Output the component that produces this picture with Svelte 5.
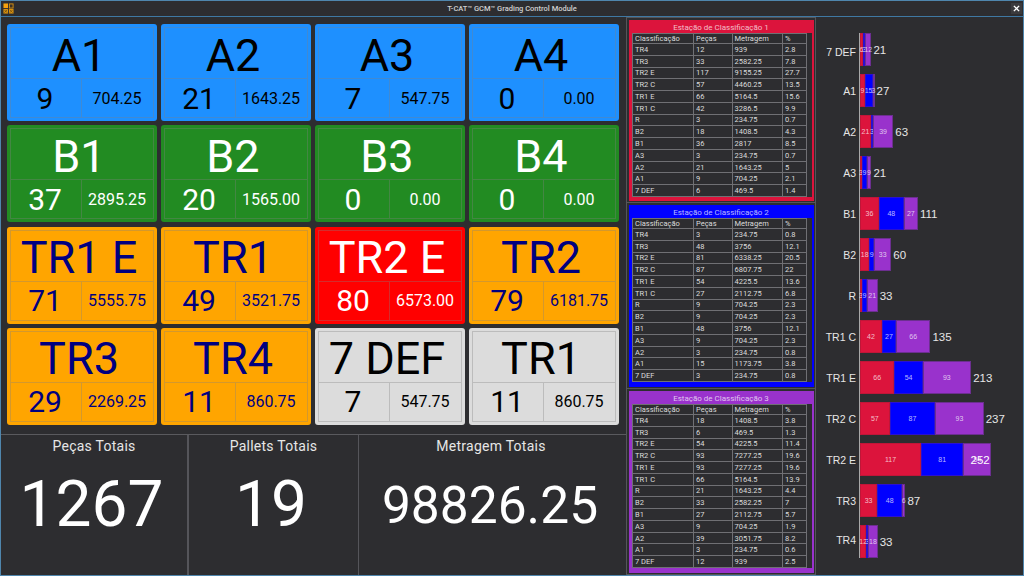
<script>
  const tiles = [
    { name: 'A1', n: '9', m: '704.25', c: 'blue' },
    { name: 'A2', n: '21', m: '1643.25', c: 'blue' },
    { name: 'A3', n: '7', m: '547.75', c: 'blue' },
    { name: 'A4', n: '0', m: '0.00', c: 'blue' },
    { name: 'B1', n: '37', m: '2895.25', c: 'green' },
    { name: 'B2', n: '20', m: '1565.00', c: 'green' },
    { name: 'B3', n: '0', m: '0.00', c: 'green' },
    { name: 'B4', n: '0', m: '0.00', c: 'green' },
    { name: 'TR1 E', n: '71', m: '5555.75', c: 'orange' },
    { name: 'TR1', n: '49', m: '3521.75', c: 'orange' },
    { name: 'TR2 E', n: '80', m: '6573.00', c: 'red' },
    { name: 'TR2', n: '79', m: '6181.75', c: 'orange' },
    { name: 'TR3', n: '29', m: '2269.25', c: 'orange' },
    { name: 'TR4', n: '11', m: '860.75', c: 'orange' },
    { name: '7 DEF', n: '7', m: '547.75', c: 'gray' },
    { name: 'TR1', n: '11', m: '860.75', c: 'gray' }
  ];
  const names = ['TR4', 'TR3', 'TR2 E', 'TR2 C', 'TR1 E', 'TR1 C', 'R', 'B2', 'B1', 'A3', 'A2', 'A1', '7 DEF'];
  const stations = [
    { title: 'Estação de Classificação 1', c: 'crimson', rows: [
      ['12', '939', '2.8'], ['33', '2582.25', '7.8'], ['117', '9155.25', '27.7'], ['57', '4460.25', '13.5'],
      ['66', '5164.5', '15.6'], ['42', '3286.5', '9.9'], ['3', '234.75', '0.7'], ['18', '1408.5', '4.3'],
      ['36', '2817', '8.5'], ['3', '234.75', '0.7'], ['21', '1643.25', '5'], ['9', '704.25', '2.1'], ['6', '469.5', '1.4'] ] },
    { title: 'Estação de Classificação 2', c: 'bluest', rows: [
      ['3', '234.75', '0.8'], ['48', '3756', '12.1'], ['81', '6338.25', '20.5'], ['87', '6807.75', '22'],
      ['54', '4225.5', '13.6'], ['27', '2112.75', '6.8'], ['9', '704.25', '2.3'], ['9', '704.25', '2.3'],
      ['48', '3756', '12.1'], ['9', '704.25', '2.3'], ['3', '234.75', '0.8'], ['15', '1173.75', '3.8'], ['3', '234.75', '0.8'] ] },
    { title: 'Estação de Classificação 3', c: 'orchid', rows: [
      ['18', '1408.5', '3.8'], ['6', '469.5', '1.3'], ['54', '4225.5', '11.4'], ['93', '7277.25', '19.6'],
      ['93', '7277.25', '19.6'], ['66', '5164.5', '13.9'], ['21', '1643.25', '4.4'], ['33', '2582.25', '7'],
      ['27', '2112.75', '5.7'], ['9', '704.25', '1.9'], ['39', '3051.75', '8.2'], ['3', '234.75', '0.6'], ['12', '939', '2.5'] ] }
  ];
  const bars = [
    ['7 DEF', 6, 3, 12], ['A1', 9, 15, 3], ['A2', 21, 3, 39], ['A3', 3, 9, 9], ['B1', 36, 48, 27],
    ['B2', 18, 9, 33], ['R', 3, 9, 21], ['TR1 C', 42, 27, 66], ['TR1 E', 66, 54, 93], ['TR2 C', 57, 87, 93],
    ['TR2 E', 117, 81, 54], ['TR3', 33, 48, 6], ['TR4', 12, 3, 18]
  ];
  const scale = 0.5218;
  const segClass = ['s-red', 's-blue', 's-purple'];
</script>

<div class="window">
  <header class="titlebar">
    <svg class="logo" width="11" height="11" viewBox="0 0 12 12">
      <rect x="0.5" y="0.5" width="5" height="5" fill="#f5a10e" />
      <rect x="7" y="1" width="4" height="4.5" fill="#3a3128" stroke="#d9920f" />
      <rect x="0.5" y="6.5" width="5" height="5" fill="#d9920f" />
      <rect x="6.5" y="6.5" width="5" height="5" fill="#d9920f" />
      <path d="M1.5 7.5l3 3M4.5 7.5l-3 3M7.5 7.5l3 3M10.5 7.5l-3 3" stroke="#6b4a12" stroke-width="0.8" />
    </svg>
    <span class="apptitle">T-CAT™ GCM™ Grading Control Module</span>
    <span class="close">
      <svg width="7" height="7" viewBox="0 0 8 8"><path d="M1 1l6 6M7 1l-6 6" stroke="#fff" stroke-width="1.6" /></svg>
    </span>
  </header>

  <main class="main">
    <section class="left">
      <div class="tiles">
        {#each tiles as t}
          <div class="tile {t.c}">
            <div class="inner">
              <div class="name">{t.name}</div>
              <div class="count">{t.n}</div>
              <div class="meters">{t.m}</div>
            </div>
          </div>
        {/each}
      </div>
      <div class="totals">
        <div class="total t1"><div class="tl">Peças Totais</div><div class="tv">1267</div></div>
        <div class="total t2"><div class="tl">Pallets Totais</div><div class="tv">19</div></div>
        <div class="total t3"><div class="tl">Metragem Totais</div><div class="tv small">98826.25</div></div>
      </div>
    </section>

    <section class="stations">
      {#each stations as s}
        <div class="frame">
          <div class="station {s.c}">
            <div class="stitle">{s.title}</div>
            <table>
              <colgroup><col class="c1" /><col class="c2" /><col class="c3" /><col class="c4" /></colgroup>
              <thead><tr><th>Classificação</th><th>Peças</th><th>Metragem</th><th>%</th></tr></thead>
              <tbody>
                {#each s.rows as r, i}
                  <tr><td>{names[i]}</td><td>{r[0]}</td><td>{r[1]}</td><td>{r[2]}</td></tr>
                {/each}
              </tbody>
            </table>
          </div>
        </div>
      {/each}
    </section>

    <section class="chart">
      {#each bars as b}
        <div class="row">
          <div class="rlabel">{b[0]}</div>
          <div class="plot">
            {#each [b[1], b[2], b[3]] as v, i}
              <div class="seg {segClass[i]}" style="width:{v * scale}px"><span>{v}</span></div>
            {/each}
            <div class="sum" class:clamped={b[1] + b[2] + b[3] > 240}>{b[1] + b[2] + b[3]}</div>
          </div>
        </div>
      {/each}
    </section>
  </main>
</div>

<style>
  :global(body) { margin: 0; background: #2d2d30; }
  .window {
    box-sizing: border-box;
    width: 1024px;
    height: 576px;
    background: #2d2d30;
    border: 1px solid #4f86ad;
    display: flex;
    flex-direction: column;
    overflow: hidden;
    font-family: Roboto, sans-serif;
  }
  .titlebar {
    flex: none;
    height: 15px;
    border-bottom: 1px solid #3f78a3;
    display: flex;
    align-items: center;
    position: relative;
    background: #2d2d30;
  }
  .logo { margin-left: 2px; }
  .apptitle {
    position: absolute;
    left: 0;
    right: 0;
    text-align: center;
    font-size: 7.5px;
    font-weight: 500;
    color: #d0d0d0;
    line-height: 15px;
  }
  .close {
    position: absolute;
    right: 1px;
    top: 2px;
    width: 11px;
    height: 11px;
    background: #3a3a3d;
    display: flex;
    align-items: center;
    justify-content: center;
  }
  .main { flex: 1; display: flex; min-height: 0; }
  .left { flex: none; width: 625px; display: flex; flex-direction: column; }
  .tiles {
    flex: none;
    display: grid;
    grid-template-columns: repeat(4, 150px);
    grid-template-rows: repeat(4, 97px);
    column-gap: 4px;
    row-gap: 4.33px;
    padding: 7px 0 0 6px;
    height: 417px;
    box-sizing: border-box;
  }
  .tile { border-radius: 3px; padding: 3px; box-sizing: border-box; }
  .blue { background: #1e90ff; color: #000; }
  .green { background: #228b22; color: #fff; }
  .orange { background: #ffa500; color: #000080; }
  .red { background: #ff0000; color: #fff; }
  .gray { background: #dcdcdc; color: #000; }
  .inner {
    box-sizing: border-box;
    height: 100%;
    border: 1px solid rgba(128, 128, 128, 0.35);
    display: grid;
    grid-template-columns: 71px 1fr;
    grid-template-rows: 51px 1fr;
  }
  .name {
    grid-column: 1 / 3;
    box-sizing: border-box;
    padding: 4px 6px 0 0;
    font-size: 45px;
    display: flex;
    align-items: center;
    justify-content: center;
    border-bottom: 1px solid rgba(128, 128, 128, 0.35);
  }
  .count {
    box-sizing: border-box;
    padding-right: 2px;
    font-size: 30px;
    display: flex;
    align-items: center;
    justify-content: center;
    border-right: 1px solid rgba(128, 128, 128, 0.35);
  }
  .meters {
    box-sizing: border-box;
    padding-right: 1px;
    font-size: 16px;
    display: flex;
    align-items: center;
    justify-content: center;
  }
  .totals {
    flex: 1;
    display: flex;
    border-top: 1px solid #5a5a5e;
    color: #e6e6e6;
  }
  .total { display: flex; flex-direction: column; align-items: center; box-sizing: border-box; }
  .t1 { width: 188px; border-right: 2px solid #55555a; }
  .t2 { width: 170px; border-right: 1px solid #55555a; }
  .t3 { flex: 1; }
  .t3 .tl { margin-right: 3px; }
  .tl { font-size: 14px; line-height: 16px; margin-top: 3px; letter-spacing: 0.25px; }
  .tv { font-size: 64px; line-height: 76px; margin: 13px 5px 0 0; color: #fff; }
  .tv.small { font-size: 51.5px; margin-top: 14px; }

  .stations { flex: none; width: 190px; display: flex; flex-direction: column; }
  .frame { box-sizing: border-box; padding: 2px 1px 1px 2px; border: 1px solid #55555a; height: 186px; }
  .frame + .frame { border-top: 0; }
  .frame:last-child { height: auto; flex: 1; }
  .station { box-sizing: border-box; height: 100%; padding: 0 4px 0 3px; }
  .crimson { background: #dc143c; }
  .bluest { background: #0000ff; }
  .orchid { background: #9932cc; }
  .stitle {
    height: 13px;
    line-height: 15px;
    font-size: 8px;
    text-align: center;
    color: rgba(255, 255, 255, 0.72);
  }
  table {
    border-collapse: collapse;
    table-layout: fixed;
    width: 174px;
    height: 164px;
    background: #2d2d30;
    box-shadow: 5px 0 0 #2d2d30;
    color: #dcdcdc;
    font-size: 7.5px;
  }
  .c1 { width: 61px; }
  .c2 { width: 38.5px; }
  .c3 { width: 50.5px; }
  .c4 { width: 24px; }
  th, td {
    border: 1px solid #707074;
    padding: 0 2px;
    text-align: left;
    font-weight: 400;
    line-height: 9px;
    white-space: nowrap;
    overflow: hidden;
  }

  .chart {
    flex: 1;
    display: flex;
    flex-direction: column;
    padding-top: 16px;
    font-family: "Liberation Sans", sans-serif;
    color: #e6e6e6;
  }
  .row { display: flex; align-items: stretch; }
  .rlabel {
    flex: none;
    width: 40px;
    font-size: 10.5px;
    text-align: right;
    align-self: center;
    white-space: nowrap;
  }
  .plot {
    margin-left: 3px;
    display: flex;
    align-items: center;
    padding: 4px 0;
    border-left: 1px solid #a8a8a8;
  }
  .row:first-child .plot { padding-top: 0; }
  .row:last-child .plot { padding-bottom: 0; }
  .seg {
    flex: none;
    box-sizing: border-box;
    height: 33px;
    display: flex;
    align-items: center;
    justify-content: center;
    font-size: 7px;
    color: rgba(255, 255, 255, 0.72);
    white-space: nowrap;
  }
  .s-red { background: #dc143c; border: 1px solid #c01638; }
  .s-blue { background: #0000ff; border: 1px solid #2a10d0; }
  .s-purple { background: #9932cc; border: 1px solid #6c2f90; }
  .sum { margin-left: 2px; font-size: 11.5px; flex: none; position: relative; }
  .sum.clamped { margin-left: -21px; color: #fff; }
</style>
